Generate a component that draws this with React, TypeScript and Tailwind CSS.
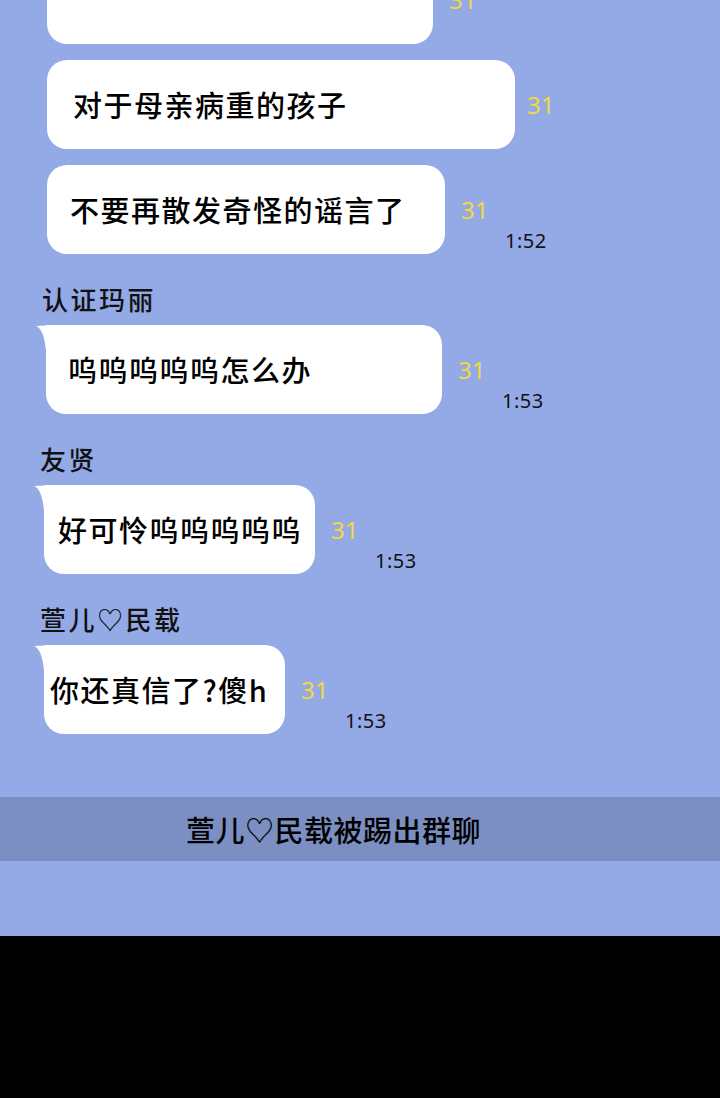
import type { ReactNode } from 'react';

// Chat panel: plain bubbles, named bubbles with a tail, and a system banner

const cjk = { fontFamily: '"Noto Sans CJK SC", "Noto Sans", sans-serif' };
const latin = { fontFamily: '"Noto Sans", "Liberation Sans", sans-serif' };

interface BubbleProps {
  text: ReactNode;
  width: number;
  padLeft: number;
  time?: string;
  tail?: boolean;
  tight?: boolean;
  className?: string;
}

function Meta({ time, tight }: { time?: string; tight?: boolean }) {
  return (
    <div className="flex flex-col pt-[31px]" style={latin}>
      <span className={`${tight ? 'ml-3' : 'ml-4'} text-[24px] leading-[28px] text-[#f4d83e]`}>31</span>
      {time && (
        <span className="ml-[60px] mt-[5px] text-[20px] leading-[24px] tracking-[0.5px] text-[#111]">{time}</span>
      )}
    </div>
  );
}

function Bubble({ text, width, padLeft, time, tail, tight, className }: BubbleProps) {
  return (
    <div className={`flex ${className ?? ''}`}>
      <div
        className={`relative flex h-[89px] shrink-0 items-center bg-white rounded-[20px] ${tail ? 'rounded-tl-none' : ''}`}
        style={{ width, paddingLeft: padLeft }}
      >
        {tail && (
          <svg className="absolute -left-[10px] top-0" width="20" height="26" viewBox="0 0 20 26">
            <path d="M20 0 L0 1 Q8 4 10 26 L20 26 Z" fill="#fff" />
          </svg>
        )}
        <span className="text-[29px] font-medium leading-none tracking-[1.5px] text-black" style={cjk}>
          {text}
        </span>
      </div>
      <Meta time={time} tight={tight} />
    </div>
  );
}

function Name({ children, className }: { children: ReactNode; className?: string }) {
  return (
    <div
      className={`mt-[30px] mb-[11px] text-[26px] font-medium leading-[30px] tracking-[2.5px] text-[#111] ${className ?? ''}`}
      style={cjk}
    >
      {children}
    </div>
  );
}

export default function App() {
  return (
    <div className="flex h-[1098px] w-[720px] flex-col overflow-hidden bg-black">
      <div className="flex h-[936px] flex-col bg-[#93aae6]">
        <div className="flex flex-col">
          <Bubble text="" width={386} padLeft={26} className="ml-[47px] -mt-[45px]" />
          <Bubble text="对于母亲病重的孩子" width={468} padLeft={26} tight className="ml-[47px] mt-4" />
          <Bubble text="不要再散发奇怪的谣言了" width={398} padLeft={23} time="1:52" className="ml-[47px] mt-4" />

          <Name className="ml-[42px]">认证玛丽</Name>
          <Bubble text="呜呜呜呜呜怎么办" width={396} padLeft={22} time="1:53" tail className="ml-[46px]" />

          <Name className="ml-[40px]">友贤</Name>
          <Bubble text="好可怜呜呜呜呜呜" width={271} padLeft={14} time="1:53" tail className="ml-[44px]" />

          <Name className="ml-[40px]">萱儿♡民载</Name>
          <Bubble text="你还真信了?傻h" width={241} padLeft={6} time="1:53" tail className="ml-[44px]" />
        </div>

        <div className="mt-[63px] flex h-[64px] items-center bg-[#7b8fc3] pl-[186px]">
          <span className="text-[29px] font-medium leading-none tracking-[0.5px] text-black" style={cjk}>
            萱儿♡民载被踢出群聊
          </span>
        </div>
      </div>
    </div>
  );
}
